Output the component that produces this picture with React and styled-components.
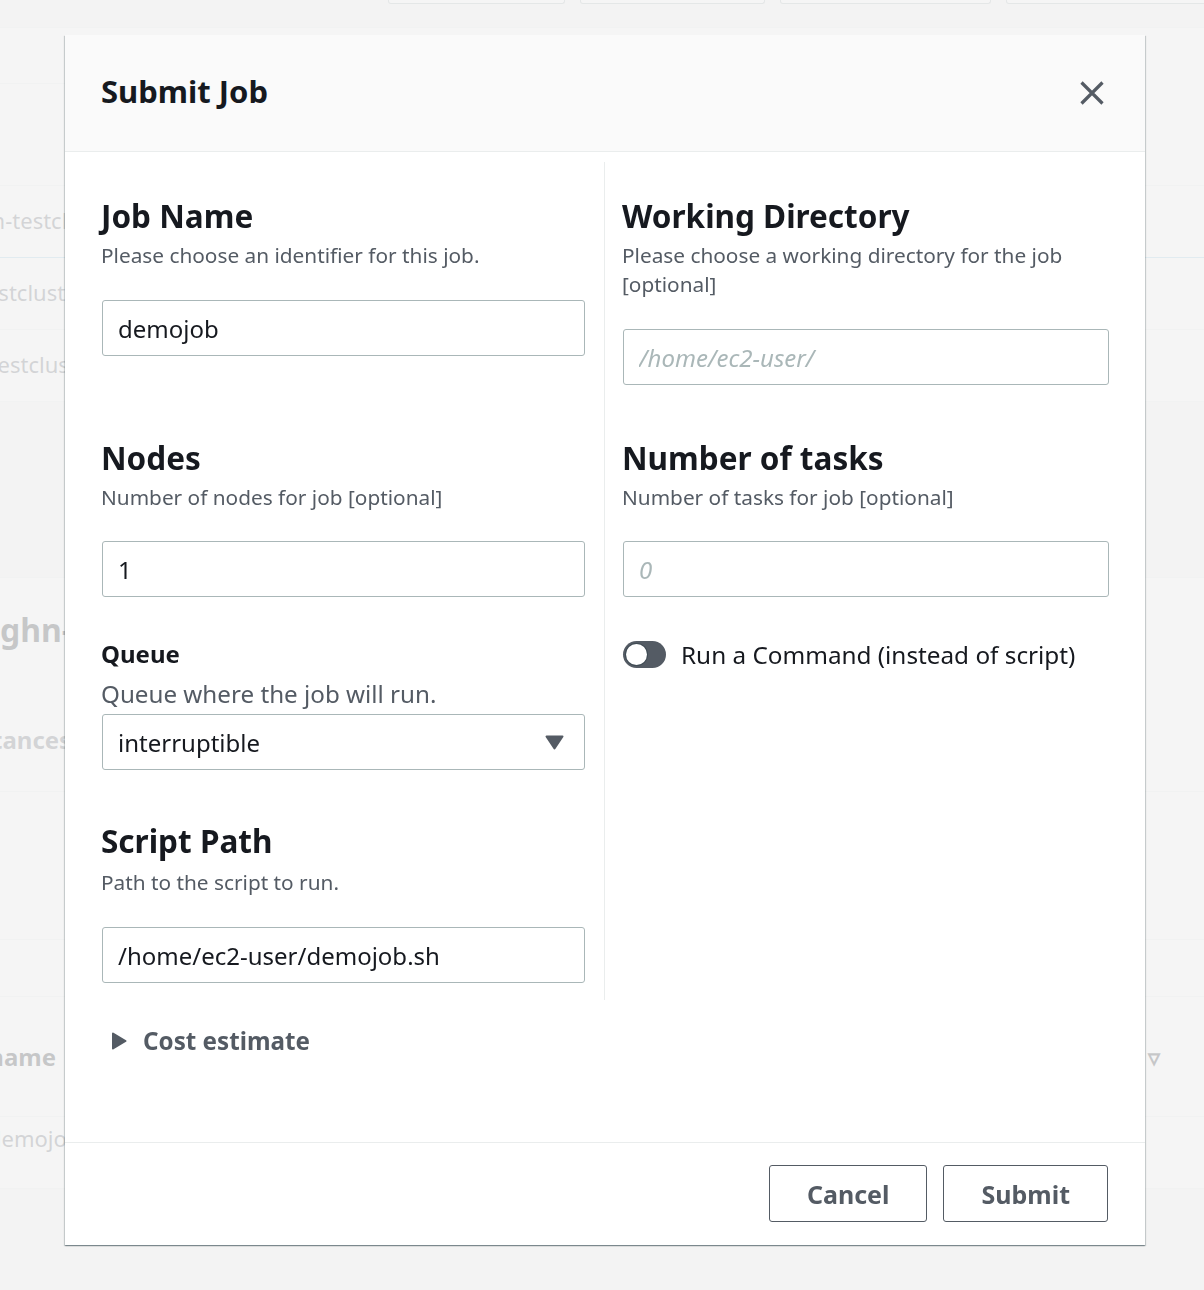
import React from 'react';
import styled, { createGlobalStyle } from 'styled-components';

const GlobalStyle = createGlobalStyle`
  html, body {
    margin: 0;
    padding: 0;
  }
  body {
    background: #f2f3f3;
    font-family: 'Noto Sans', 'Open Sans', sans-serif;
    color: #16191f;
    overflow: hidden;
  }
  * {
    box-sizing: border-box;
  }
`;

/* ---------- page behind the modal ---------- */

const Page = styled.div`
  height: 1290px;
  overflow: hidden;
`;

const TopBar = styled.div`
  display: flex;
  align-items: flex-end;
  gap: 15px;
  height: 4px;
  padding-left: 388px;
`;

const TopButton = styled.div`
  width: ${props => props.$width}px;
  height: 4px;
  flex-shrink: 0;
  background: #fff;
  border: 1px solid #aab7b8;
  border-top: none;
  border-radius: 0 0 3px 3px;
`;

const ClusterPanel = styled.section`
  margin-top: 23px;
  background: #fff;
  border-top: 1px solid #eaeded;
`;

const PanelHeader = styled.div`
  height: 56px;
  width: 947px;
  border-bottom: 1px solid #eaeded;
`;

const FilterArea = styled.div`
  height: 102px;
  border-bottom: 1px solid #eaeded;
`;

const ClusterRow = styled.div`
  height: 72px;
  display: flex;
  align-items: center;
  padding-bottom: 4px;
  border-bottom: 1px solid ${props => (props.$selected ? '#99cbe4' : '#eaeded')};
  background: #fff;
`;

const ClusterName = styled.span`
  font-size: 22px;
  color: #545b64;
  margin-left: -22px;
  white-space: nowrap;
`;

const DetailPanel = styled.section`
  margin-top: 175px;
  background: #fff;
  border-top: 1px solid #eaeded;
`;

const DetailTitle = styled.div`
  height: 110px;
  display: flex;
  align-items: center;
  padding-bottom: 8px;
  font-size: 32px;
  font-weight: 700;
  white-space: nowrap;
`;

const TabRow = styled.div`
  height: 104px;
  display: flex;
  align-items: center;
  border-bottom: 1px solid #eaeded;
  font-size: 24px;
  font-weight: 700;
  color: #545b64;
  white-space: nowrap;
  span {
    margin-left: -45px;
  }
`;

const FilterBlock = styled.div`
  height: 148px;
  border-bottom: 1px solid #eaeded;
`;

const SpacerBlock = styled.div`
  height: 57px;
  border-bottom: 1px solid #eaeded;
`;

const TableHeader = styled.div`
  height: 120px;
  display: flex;
  align-items: center;
  justify-content: space-between;
  padding-right: 44px;
  border-bottom: 1px solid #eaeded;
  font-size: 24px;
  font-weight: 700;
  white-space: nowrap;
  span:first-child {
    margin-left: -56px;
  }
`;

const TableRow = styled.div`
  height: 72px;
  display: flex;
  align-items: flex-start;
  padding-top: 6px;
  border-bottom: 1px solid #eaeded;
  font-size: 22px;
  color: #545b64;
  span {
    margin-left: -12px;
  }
`;

/* ---------- modal ---------- */

const Overlay = styled.div`
  position: fixed;
  inset: 0;
  background: rgba(242, 243, 243, 0.8);
  display: flex;
  align-items: flex-start;
  padding: 35px 0 0 65px;
`;

const Modal = styled.div`
  width: 1080px;
  background: #fff;
  box-shadow: 0 1px 1px 0 rgba(0, 28, 36, 0.3), 1px 1px 1px 0 rgba(0, 28, 36, 0.15),
    -1px 1px 1px 0 rgba(0, 28, 36, 0.15);
`;

const Header = styled.header`
  height: 117px;
  display: flex;
  align-items: center;
  justify-content: space-between;
  padding: 0 40px 0 36px;
  background: #fafafa;
  border-bottom: 1px solid #eaeded;
`;

const Title = styled.h2`
  margin: 0 0 5px;
  font-size: 31px;
  line-height: 36px;
  font-weight: 700;
  color: #16191f;
`;

const CloseButton = styled.button`
  width: 26px;
  height: 26px;
  padding: 0;
  border: none;
  background: none;
  display: flex;
  align-items: center;
  justify-content: center;
  cursor: pointer;
`;

const Body = styled.div`
  padding: 10px 36px 85px 37px;
`;

const FieldsGrid = styled.div`
  display: grid;
  grid-template-columns: 503px 1fr;
`;

const Cell = styled.div`
  padding-top: ${props => props.$top || 0}px;
  padding-bottom: ${props => props.$bottom || 0}px;
  ${props =>
    props.$left
      ? 'padding-right: 19px; border-right: 1px solid #eaeded;'
      : 'padding-left: 18px;'}
`;

const FieldHeading = styled.h3`
  margin: ${props => props.$gap || 0}px 0 0 -1px;
  font-size: 31.5px;
  line-height: 40px;
  font-weight: 700;
  color: #16191f;
`;

const FieldLabel = styled.div`
  margin-left: -1px;
  font-size: 24px;
  line-height: 32px;
  font-weight: 700;
  color: #16191f;
`;

const FieldDescription = styled.p`
  margin: ${props => props.$gap || 5}px 0 0 -1px;
  font-size: ${props => (props.$large ? 24.2 : 20.8)}px;
  line-height: ${props => (props.$large ? 32 : 29)}px;
  color: #545b64;
`;

const TextInput = styled.input`
  display: block;
  width: 100%;
  height: 56px;
  margin-top: ${props => props.$gap || 30}px;
  padding: 0 15px;
  border: 1px solid #aab7b8;
  border-radius: 3px;
  background: #fff;
  font-family: inherit;
  font-size: 24px;
  color: #16191f;
  outline: none;
  &::placeholder {
    color: #aab7b8;
    font-style: italic;
  }
`;

const SelectTrigger = styled.button`
  width: 100%;
  height: 56px;
  margin-top: ${props => props.$gap || 4}px;
  padding: 0 20px 0 15px;
  display: flex;
  align-items: center;
  justify-content: space-between;
  border: 1px solid #aab7b8;
  border-radius: 3px;
  background: #fff;
  font-family: inherit;
  font-size: 24px;
  color: #16191f;
  cursor: pointer;
`;

const ToggleRow = styled.label`
  display: flex;
  align-items: center;
  gap: 15px;
  font-size: 24.3px;
  line-height: 27px;
  color: #16191f;
`;

const ToggleTrack = styled.span`
  width: 43px;
  height: 27px;
  flex-shrink: 0;
  display: flex;
  align-items: center;
  padding: 0 3px;
  border-radius: 14px;
  background: #545b64;
`;

const ToggleKnob = styled.span`
  width: 21px;
  height: 21px;
  border-radius: 50%;
  background: #fff;
  box-shadow: 0 0 0 1px rgba(0, 28, 36, 0.25);
`;

const Expander = styled.button`
  margin-top: 25px;
  padding: 0 0 0 9px;
  display: flex;
  align-items: center;
  gap: 16px;
  border: none;
  background: none;
  font-family: inherit;
  font-size: 24.2px;
  line-height: 32px;
  font-weight: 700;
  color: #545b64;
  cursor: pointer;
`;

const Footer = styled.footer`
  display: flex;
  justify-content: flex-end;
  gap: 16px;
  padding: 22px 37px 23px;
  border-top: 1px solid #eaeded;
`;

const Button = styled.button`
  height: 57px;
  padding: 0 37px;
  border: 1px solid #545b64;
  border-radius: 3px;
  background: #fff;
  font-family: inherit;
  font-size: 25px;
  font-weight: 700;
  color: #545b64;
  cursor: pointer;
`;

const CloseIcon = () => (
  <svg width="24" height="24" viewBox="0 0 24 24">
    <path d="M1.5 1.5 L22.5 22.5 M22.5 1.5 L1.5 22.5" stroke="#545b64" strokeWidth="3.2" fill="none" />
  </svg>
);

const CaretDown = () => (
  <svg width="19" height="15" viewBox="0 0 19 15">
    <polygon points="1.5,1.5 17.5,1.5 9.5,13.5" fill="#545b64" stroke="#545b64" strokeWidth="2" strokeLinejoin="round" />
  </svg>
);

const CaretRight = () => (
  <svg width="16" height="18" viewBox="0 0 16 18">
    <polygon points="2,1.5 14.5,9 2,16.5" fill="#545b64" stroke="#545b64" strokeWidth="2" strokeLinejoin="round" />
  </svg>
);

const Background = () => (
  <Page>
    <TopBar>
      <TopButton $width={177} />
      <TopButton $width={185} />
      <TopButton $width={211} />
      <TopButton $width={210} />
    </TopBar>
    <ClusterPanel>
      <PanelHeader />
      <FilterArea />
      <ClusterRow $selected>
        <ClusterName>hn-testcluster</ClusterName>
      </ClusterRow>
      <ClusterRow>
        <ClusterName>testcluster</ClusterName>
      </ClusterRow>
      <ClusterRow>
        <ClusterName>xtestcluster</ClusterName>
      </ClusterRow>
    </ClusterPanel>
    <DetailPanel>
      <DetailTitle>ghn-testcluster</DetailTitle>
      <TabRow>
        <span>Instances</span>
      </TabRow>
      <FilterBlock />
      <SpacerBlock />
      <TableHeader>
        <span>Job name</span>
        <span>▿</span>
      </TableHeader>
      <TableRow>
        <span>demojob</span>
      </TableRow>
    </DetailPanel>
  </Page>
);

export default function App() {
  return (
    <>
      <GlobalStyle />
      <Background />
      <Overlay>
        <Modal role="dialog" aria-label="Submit Job">
          <Header>
            <Title>Submit Job</Title>
            <CloseButton aria-label="Close">
              <CloseIcon />
            </CloseButton>
          </Header>
          <Body>
            <FieldsGrid>
              <Cell $left $top={34}>
                <FieldHeading>Job Name</FieldHeading>
                <FieldDescription>Please choose an identifier for this job.</FieldDescription>
                <TextInput readOnly value="demojob" />
              </Cell>
              <Cell $top={34}>
                <FieldHeading>Working Directory</FieldHeading>
                <FieldDescription>Please choose a working directory for the job [optional]</FieldDescription>
                <TextInput readOnly placeholder="/home/ec2-user/" />
              </Cell>

              <Cell $left $top={53}>
                <FieldHeading>Nodes</FieldHeading>
                <FieldDescription>Number of nodes for job [optional]</FieldDescription>
                <TextInput readOnly value="1" $gap={29} />
              </Cell>
              <Cell $top={53}>
                <FieldHeading>Number of tasks</FieldHeading>
                <FieldDescription>Number of tasks for job [optional]</FieldDescription>
                <TextInput readOnly placeholder="0" $gap={29} />
              </Cell>

              <Cell $left $top={41} $bottom={17}>
                <FieldLabel>Queue</FieldLabel>
                <FieldDescription $large $gap={8}>Queue where the job will run.</FieldDescription>
                <SelectTrigger>
                  <span>interruptible</span>
                  <CaretDown />
                </SelectTrigger>
                <FieldHeading $gap={51}>Script Path</FieldHeading>
                <FieldDescription $gap={7}>Path to the script to run.</FieldDescription>
                <TextInput readOnly value="/home/ec2-user/demojob.sh" />
              </Cell>
              <Cell $top={44}>
                <ToggleRow>
                  <ToggleTrack>
                    <ToggleKnob />
                  </ToggleTrack>
                  Run a Command (instead of script)
                </ToggleRow>
              </Cell>
            </FieldsGrid>
            <Expander>
              <CaretRight />
              Cost estimate
            </Expander>
          </Body>
          <Footer>
            <Button>Cancel</Button>
            <Button>Submit</Button>
          </Footer>
        </Modal>
      </Overlay>
    </>
  );
}
